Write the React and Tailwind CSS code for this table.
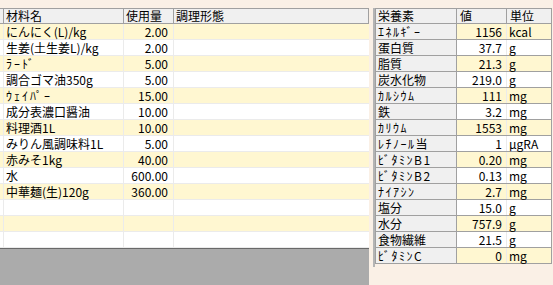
import React from 'react';

const ingredients = [
  ['にんにく(L)/kg', '2.00'],
  ['生姜(土生姜L)/kg', '2.00'],
  ['ﾗｰﾄﾞ', '5.00'],
  ['調合ゴマ油350g', '5.00'],
  ['ｳｪｲﾊﾟｰ', '15.00'],
  ['成分表濃口醤油', '10.00'],
  ['料理酒1L', '10.00'],
  ['みりん風調味料1L', '5.00'],
  ['赤みそ1kg', '40.00'],
  ['水', '600.00'],
  ['中華麺(生)120g', '360.00'],
  ['', ''],
  ['', ''],
  ['', ''],
];

const nutrients = [
  ['ｴﾈﾙｷﾞｰ', '1156', 'kcal'],
  ['蛋白質', '37.7', 'g'],
  ['脂質', '21.3', 'g'],
  ['炭水化物', '219.0', 'g'],
  ['ｶﾙｼｳﾑ', '111', 'mg'],
  ['鉄', '3.2', 'mg'],
  ['ｶﾘｳﾑ', '1553', 'mg'],
  ['ﾚﾁﾉｰﾙ当', '1', 'μgRA'],
  ['ﾋﾞﾀﾐﾝB1', '0.20', 'mg'],
  ['ﾋﾞﾀﾐﾝB2', '0.13', 'mg'],
  ['ﾅｲｱｼﾝ', '2.7', 'mg'],
  ['塩分', '15.0', 'g'],
  ['水分', '757.9', 'g'],
  ['食物繊維', '21.5', 'g'],
  ['ﾋﾞﾀﾐﾝC', '0', 'mg'],
];

const font = { fontFamily: '"Noto Sans CJK JP", "DejaVu Sans", sans-serif' };

// half-width kana are drawn narrower than in the original bitmap font
const isHalfKana = (s) => /[\uff61-\uff9f]/.test(s);

export default function App() {
  return (
    <div
      className="w-[553px] h-[285px] bg-[#faf0e6] flex text-[12px] leading-[15px] text-black overflow-hidden"
      style={font}
    >
      {/* recipe grid */}
      <div className="w-[369px] flex flex-col pt-2">
        <div className="h-[16px] flex bg-[#f0f0f0] border-t border-b border-[#a0a0a0] leading-[14px]">
          <div className="w-[4px] border-r border-[#a0a0a0]" />
          <div className="w-[120px] border-r border-[#a0a0a0] pl-[2px]">材料名</div>
          <div className="w-[50px] border-r border-[#a0a0a0] pl-[2px]">使用量</div>
          <div className="flex-1 border-r border-[#a0a0a0] pl-[2px]">調理形態</div>
        </div>
        {ingredients.map(([name, qty], i) => (
          <div
            key={i}
            className={`h-[16px] flex border-b border-[#ebebeb] ${i % 2 === 0 ? 'bg-[#fff7d1]' : 'bg-white'}`}
          >
            <div className="w-[4px] border-r border-[#ebebeb]" />
            <div
              className={`w-[120px] border-r border-[#ebebeb] pl-[2px] whitespace-nowrap ${isHalfKana(name) ? 'tracking-[2px]' : ''}`}
            >
              {name}
            </div>
            <div className="w-[50px] border-r border-[#ebebeb] pr-[5px] text-right">{qty}</div>
            <div className="flex-1" />
          </div>
        ))}
        <div className="flex-1 bg-[#ababab] border-t border-[#696969]" />
      </div>

      {/* nutrition grid */}
      <div className="ml-[4px] mt-2 w-[179px] h-[259px] border-l-2 border-[#b4b4b4] flex flex-col">
        <div className="h-[16px] flex bg-[#f0f0f0] border border-[#a0a0a0] leading-[14px]">
          <div className="w-[81px] border-r border-[#a0a0a0] pl-[2px]">栄養素</div>
          <div className="w-[50px] border-r border-[#a0a0a0] pl-[3px]">値</div>
          <div className="flex-1 pl-[3px]">単位</div>
        </div>
        {nutrients.map(([label, val, unit], i) => (
          <div key={label} className="h-[16px] flex border-x border-b border-[#a0a0a0]">
            <div
              className={`w-[81px] bg-[#f0f0f0] border-r border-[#a0a0a0] pl-[2px] whitespace-nowrap ${isHalfKana(label) ? 'tracking-[1.5px]' : ''}`}
            >
              {label}
            </div>
            <div
              className={`w-[50px] text-right pr-[4px] border-r border-[#ebebeb] ${i % 2 === 0 ? 'bg-[#fff7d1]' : 'bg-white'}`}
            >
              {val}
            </div>
            <div className={`flex-1 pl-[2px] ${i % 2 === 0 ? 'bg-[#fff7d1]' : 'bg-white'}`}>{unit}</div>
          </div>
        ))}
      </div>
    </div>
  );
}
